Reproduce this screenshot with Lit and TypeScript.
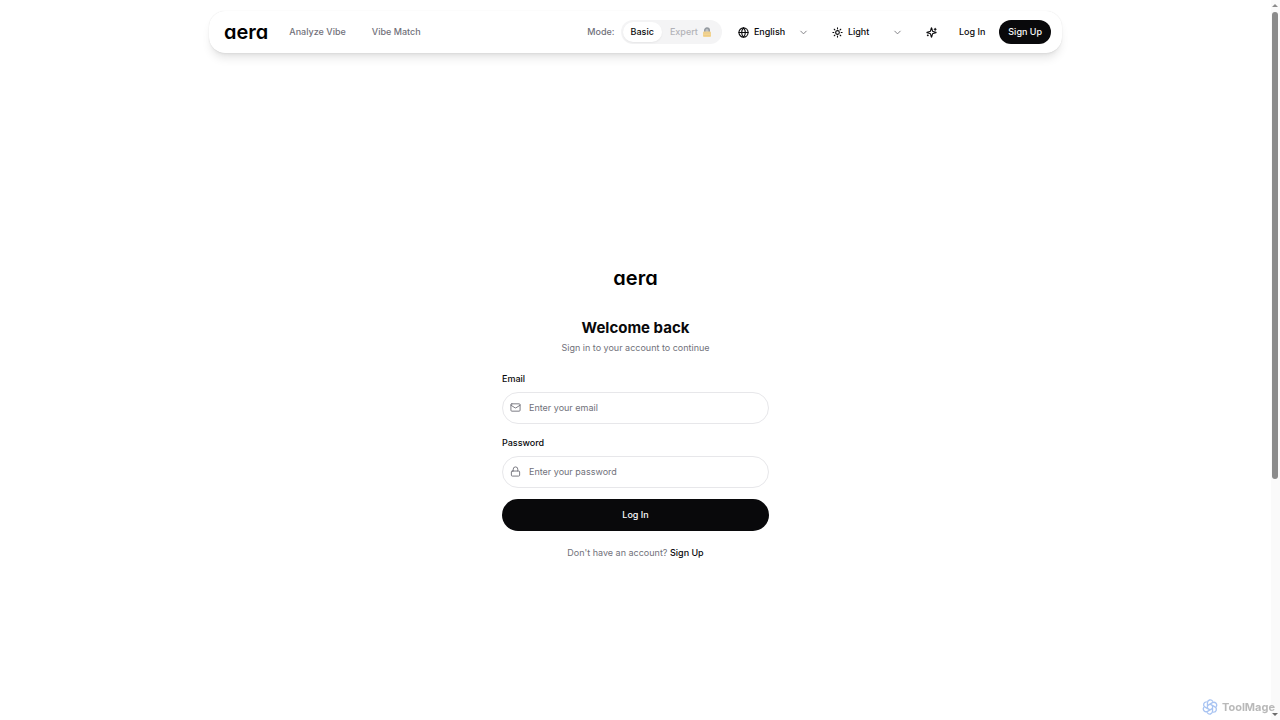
import { LitElement, html, css, svg } from "lit";
import { customElement, state } from "lit/decorators.js";

const icon = (body: unknown, cls = "icon") => html`<svg class=${cls} viewBox="0 0 24 24" aria-hidden="true">${body}</svg>`;

const globe = svg`<circle cx="12" cy="12" r="10"/><path d="M12 2a14.5 14.5 0 0 0 0 20 14.5 14.5 0 0 0 0-20"/><path d="M2 12h20"/>`;
const sun = svg`<circle cx="12" cy="12" r="4"/><path d="M12 2v2M12 20v2M4.93 4.93l1.41 1.41M17.66 17.66l1.41 1.41M2 12h2M20 12h2M6.34 17.66l-1.41 1.41M19.07 4.93l-1.41 1.41"/>`;
const chevron = svg`<path d="m6 9 6 6 6-6"/>`;
const sparkles = svg`<path d="M9.94 15.5A2 2 0 0 0 8.5 14.06l-6.14-1.58a.5.5 0 0 1 0-.96L8.5 9.94A2 2 0 0 0 9.94 8.5l1.58-6.14a.5.5 0 0 1 .96 0L14.06 8.5A2 2 0 0 0 15.5 9.94l6.14 1.58a.5.5 0 0 1 0 .96L15.5 14.06a2 2 0 0 0-1.44 1.44l-1.58 6.14a.5.5 0 0 1-.96 0z"/><path d="M20 3v4M22 5h-4M4 17v2M5 18H3"/>`;
const mail = svg`<rect x="2" y="4" width="20" height="16" rx="2"/><path d="m22 7-8.97 5.7a1.94 1.94 0 0 1-2.06 0L2 7"/>`;
const lock = svg`<rect x="3" y="11" width="18" height="11" rx="2"/><path d="M7 11V7a5 5 0 0 1 10 0v4"/>`;

@customElement("app-root")
export class AppRoot extends LitElement {
  @state() private mode = "basic";

  static styles = css`
    :host {
      display: grid;
      grid-template-columns: minmax(0, 1fr) 9px;
      min-height: 100vh;
      background: #fff;
      color: #09090b;
      font: 400 9px/14px Inter, "Liberation Sans", sans-serif;
    }
    *, *::before, *::after { box-sizing: border-box; }
    button, input, select { font: inherit; color: inherit; margin: 0; }
    button { border: 0; background: none; padding: 0; cursor: pointer; }
    a { color: inherit; text-decoration: none; }
    .page { display: flex; flex-direction: column; }
    .bar {
      display: flex;
      align-items: center;
      width: calc(100% - 24px);
      max-width: 853px;
      height: 42px;
      margin: 11px auto 0;
      padding: 0 11px 0 15px;
      border-radius: 16px;
      font-weight: 500;
      box-shadow: 0 0 1px rgba(0, 0, 0, 0.15), 0 7px 10px -2px rgba(0, 0, 0, 0.1), 0 3px 4px -3px rgba(0, 0, 0, 0.1);
    }
    .logo {
      font-size: 20px;
      line-height: 24px;
      font-weight: 600;
      font-feature-settings: "cv11" 1;
      color: #000;
    }
    .links { display: flex; gap: 26px; margin-left: 21px; color: #71717a; }
    .tools { display: flex; align-items: center; margin-left: auto; }
    .mode { color: #71717a; margin-right: 6px; }
    .switch {
      display: flex;
      padding: 2px;
      height: 24px;
      border-radius: 12px;
      background: #f4f4f5;
      margin-right: 16px;
    }
    .seg { display: flex; align-items: center; gap: 4px; padding: 0 8px; border-radius: 10px; height: 20px; font-weight: 500; }
    .seg[aria-pressed="true"] { background: #fff; box-shadow: 0 1px 2px rgba(0, 0, 0, 0.06); }
    .seg:disabled { color: #71717a; opacity: 0.5; cursor: default; }
    .emoji { width: 10px; height: 10px; }
    .pick { display: grid; align-items: center; width: 71px; margin-right: 23px; }
    .pick > * { grid-row: 1; grid-column: 1; }
    .pick .icon, .pick .chev { pointer-events: none; }
    .pick select {
      appearance: none;
      width: 100%;
      height: 24px;
      border: 0;
      background: none;
      padding: 0 0 0 16px;
      outline-offset: 2px;
    }
    .icon { width: 11px; height: 11px; fill: none; stroke: currentColor; stroke-width: 2; stroke-linecap: round; stroke-linejoin: round; }
    .pick .icon, .spark .icon { stroke-width: 2.4; }
    .chev { justify-self: end; width: 11px; height: 11px; fill: none; stroke: #77777d; stroke-width: 2; stroke-linecap: round; stroke-linejoin: round; }
    .spark { display: flex; margin-right: 22px; }
    .signup {
      display: flex;
      align-items: center;
      height: 24px;
      margin-left: 14px;
      padding: 0 9px;
      border-radius: 12px;
      background: #09090b;
      color: #fafafa;
    }
    .main { flex: 1; display: flex; align-items: center; justify-content: center; padding: 52px 16px 0; }
    .card { display: flex; flex-direction: column; width: 100%; max-width: 267px; }
    .center { text-align: center; }
    h1 { margin: 27px 0 0; font-size: 15px; line-height: 22px; font-weight: 700; }
    .sub { margin: 2px 0 0; color: #71717a; }
    form { display: flex; flex-direction: column; margin-top: 16px; }
    label { line-height: 16px; font-weight: 500; margin-bottom: 5px; }
    .field {
      display: flex;
      align-items: center;
      gap: 8px;
      height: 32px;
      margin-bottom: 11px;
      padding: 0 7px;
      border: 1px solid #e7e7ea;
      border-radius: 16px;
      color: #71717a;
    }
    .field input { flex: 1; min-width: 0; height: 24px; border: 0; padding: 0; outline: 0; background: none; color: #09090b; }
    .field input::placeholder { color: #71717a; opacity: 1; }
    .submit { height: 32px; border-radius: 16px; background: #09090b; color: #fafafa; font-weight: 500; }
    .foot { margin: 15px 0 0; color: #71717a; }
    .foot a { color: #09090b; font-weight: 500; }
    .track {
      display: flex;
      flex-direction: column;
      align-items: center;
      justify-content: space-between;
      height: 100vh;
      padding: 4px 1px 4px 0;
      background: #fafafa;
    }
    .up, .down { border: 3px solid transparent; }
    .up { border-top: 0; border-bottom: 3px solid #8b8b8b; }
    .down { border-bottom: 0; border-top: 3px solid #6b6b6b; }
    .thumbs { flex: 1; margin-top: 5px; }
    .thumb { width: 6px; height: 66.6%; border-radius: 3px; background: #8b8b8b; }
    .mark {
      position: fixed;
      right: 5px;
      bottom: 5px;
      display: flex;
      align-items: center;
      gap: 4px;
      color: #b9b9b9;
      font: 700 11px/16px Inter, sans-serif;
    }
    .flower { width: 16px; height: 16px; fill: none; stroke: #a9c4f2; stroke-width: 2; stroke-linecap: round; }
  `;

  render() {
    return html`
      <div class="page">
        <header class="bar">
          <a class="logo" href="#">aera</a>
          <nav class="links"><a href="#analyze">Analyze Vibe</a><a href="#match">Vibe Match</a></nav>
          <div class="tools">
            <span class="mode">Mode:</span>
            <div class="switch" role="group" aria-label="Mode">
              <button class="seg" aria-pressed=${this.mode === "basic"} @click=${() => (this.mode = "basic")}>Basic</button>
              <button class="seg" disabled>
                Expert
                <svg class="emoji" viewBox="0 0 20 20" aria-hidden="true">
                  <path d="M5.5 10V6.5a4.5 4.5 0 0 1 9 0V10" fill="#8a8f94" stroke="#37424c" stroke-width="3" />
                  <rect x="2" y="9" width="16" height="11" rx="2" fill="#f5b82e" />
                  <path d="M3 12h14M3 17h14" stroke="#d9981f" stroke-width="1.2" />
                </svg>
              </button>
            </div>
            <div class="pick">
              <select aria-label="Language"><option>English</option></select>
              ${icon(globe)}${icon(chevron, "chev")}
            </div>
            <div class="pick">
              <select aria-label="Theme"><option>Light</option><option>Dark</option></select>
              ${icon(sun)}${icon(chevron, "chev")}
            </div>
            <button class="spark" aria-label="Effects">${icon(sparkles)}</button>
            <a href="#login">Log In</a>
            <a class="signup" href="#signup">Sign Up</a>
          </div>
        </header>
        <main class="main">
          <section class="card">
            <div class="logo center">aera</div>
            <h1 class="center">Welcome back</h1>
            <p class="sub center">Sign in to your account to continue</p>
            <form @submit=${(e: Event) => e.preventDefault()}>
              <label for="email">Email</label>
              <div class="field">${icon(mail)}<input id="email" type="email" placeholder="Enter your email" /></div>
              <label for="password">Password</label>
              <div class="field">${icon(lock)}<input id="password" type="password" placeholder="Enter your password" /></div>
              <button class="submit">Log In</button>
            </form>
            <p class="foot center">Don't have an account? <a href="#signup">Sign Up</a></p>
          </section>
        </main>
      </div>
      <div class="track" aria-hidden="true">
        <span class="up"></span>
        <div class="thumbs"><div class="thumb"></div></div>
        <span class="down"></span>
      </div>
      <div class="mark">
        <svg class="flower" viewBox="0 0 24 24" aria-hidden="true">
          ${[0, 60, 120, 180, 240, 300].map(
            (a) => svg`<path transform="rotate(${a} 12 12)" d="M8.2 13.5V5.6a4.2 4.2 0 0 1 7.8-2.2"/>`
          )}
        </svg>
        <span>ToolMage</span>
      </div>
    `;
  }
}
